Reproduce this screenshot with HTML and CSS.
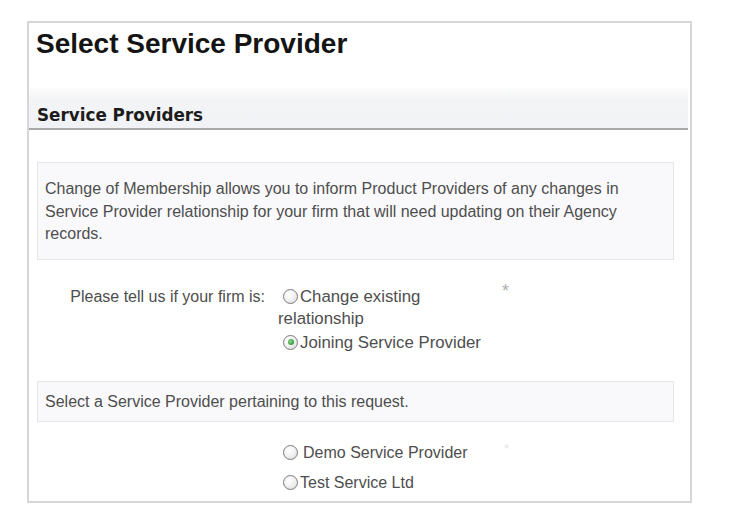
FILE: index.html
```html
<!DOCTYPE html>
<html>
<head>
<meta charset="utf-8">
<link rel="stylesheet" href="styles.css">
</head>
<body>
<div class="panel">
  <h1 class="title">Select Service Provider</h1>
  <div class="section-head">Service Providers</div>
  <div class="info info-intro">Change of Membership allows you to inform Product Providers of any changes in Service Provider relationship for your firm that will need updating on their Agency records.</div>
  <div class="field field-type">
    <div class="field-label">Please tell us if your firm is:</div>
    <div class="options options-large">
      <div class="option"><span class="radio"></span>Change existing relationship</div>
      <div class="option option-gap"><span class="radio checked"></span>Joining Service Provider</div>
    </div>
    <div class="req">*</div>
  </div>
  <div class="info info-select">Select a Service Provider pertaining to this request.</div>
  <div class="field field-providers">
    <div class="field-label"></div>
    <div class="options">
      <div class="option"><span class="radio wide"></span>Demo Service Provider</div>
      <div class="option option-gap2"><span class="radio"></span>Test Service Ltd</div>
    </div>
    <div class="req faint">*</div>
  </div>
</div>
</body>
</html>
```

FILE: styles.css
```css
html, body {
  margin: 0;
  padding: 0;
  background: #ffffff;
}

body {
  font-family: "Liberation Sans", Arial, sans-serif;
  color: #4e4e4e;
}

.panel {
  margin: 21px 0 0 27px;
  width: 661px;
  height: 478px;
  border: 2px solid #d6d6d6;
  overflow: hidden;
}

.title {
  margin: 5px 0 0 7px;
  font-size: 28px;
  line-height: 32px;
  font-weight: bold;
  color: #141414;
}

.section-head {
  margin: 27px 2px 0 0;
  height: 43px;
  box-sizing: border-box;
  padding: 18px 0 0 8px;
  font-family: "DejaVu Sans", Verdana, sans-serif;
  font-weight: bold;
  font-size: 16.8px;
  line-height: 20px;
  color: #1c1c1c;
  background: linear-gradient(#fdfdfd, #f3f4f6 30%, #f1f2f5);
  border-bottom: 2px solid #a8a8a8;
}

.info {
  margin: 32px 16px 0 8px;
  border: 1px solid #e6e6e9;
  background: #f9f9fb;
  font-size: 16px;
  line-height: 22.5px;
  color: #4e4e4e;
}

.info-intro {
  padding: 15px 28px 13px 7px;
}

.info-select {
  margin-top: 27px;
  padding: 9px 28px 8px 7px;
}

.field {
  display: grid;
  grid-template-columns: 249px 210px auto;
  font-size: 16px;
  line-height: 22px;
  color: #4e4e4e;
}

.options-large {
  font-size: 16.8px;
}

.field-type {
  margin-top: 26px;
}

.field-providers {
  margin-top: 20px;
}

.field-label {
  text-align: right;
  padding-right: 13px;
}

.option-gap {
  margin-top: 2px;
}

.option-gap2 {
  margin-top: 8px;
}

.radio {
  display: inline-block;
  box-sizing: border-box;
  width: 15px;
  height: 15px;
  margin: 0 2px 0 5px;
  vertical-align: -2px;
  border: 1px solid #7d7d7d;
  border-radius: 50%;
  background: radial-gradient(circle at 40% 35%, #ffffff 0%, #f2f2f2 45%, #d6d6d6 100%);
  position: relative;
}

.radio.wide {
  margin-right: 5px;
}

.radio.checked::after {
  content: "";
  position: absolute;
  left: 3.5px;
  top: 3.5px;
  width: 6px;
  height: 6px;
  border-radius: 50%;
  background: radial-gradient(circle at 40% 40%, #8fd88f 0%, #2f9a3a 70%, #1f7a2a 100%);
}

.req {
  margin: -5px 0 0 14px;
  font-size: 18px;
  line-height: 20px;
  color: #b0b0b0;
}

.req.faint {
  margin-top: -3px;
  margin-left: 16px;
  font-size: 13px;
  color: #e6e6e6;
}
```
